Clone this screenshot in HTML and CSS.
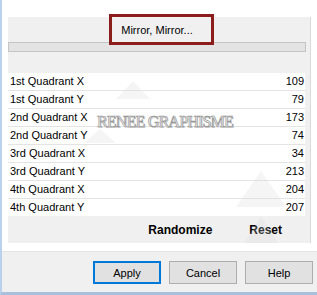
FILE: index.html
```html
<!DOCTYPE html>
<html lang="en">

<head>
    <meta charset="UTF-8">
    <title>Mirror, Mirror</title>
    <link rel="stylesheet" href="styles.css">
</head>

<body>
    <div class="window">
        <div class="content">
            <section class="panel">
                <div class="preset">Mirror, Mirror...</div>
                <div class="slider"></div>
                <ul class="params">
                    <li><span>1st Quadrant X</span><span>109</span></li>
                    <li><span>1st Quadrant Y</span><span>79</span></li>
                    <li><span>2nd Quadrant X</span><span>173</span></li>
                    <li><span>2nd Quadrant Y</span><span>74</span></li>
                    <li><span>3rd Quadrant X</span><span>34</span></li>
                    <li><span>3rd Quadrant Y</span><span>213</span></li>
                    <li><span>4th Quadrant X</span><span>204</span></li>
                    <li><span>4th Quadrant Y</span><span>207</span></li>
                </ul>
                <div class="actions">
                    <span>Randomize</span>
                    <span>Reset</span>
                </div>

                <!-- watermark over the list -->
                <svg class="shapes" width="302" height="226" viewBox="0 0 302 226">
                    <polygon points="125,64 108,82 142,82" />
                    <polygon points="92,112 76,126 108,126" />
                    <polygon points="253,154 228,190 278,190" />
                    <polygon points="253,200 236,226 270,226" />
                </svg>
                <div class="mark">RENEE GRAPHISME</div>
                <div class="highlight"></div>
            </section>
        </div>
        <footer class="buttons">
            <button class="default">Apply</button>
            <button>Cancel</button>
            <button>Help</button>
        </footer>
    </div>
</body>

</html>
```

FILE: styles.css
```css
* {
    box-sizing: border-box;
}

body {
    margin: 0;
    background: white;
    font-family: "Liberation Sans", Arial, sans-serif;
    font-size: 11px;
    color: black;
}

.window {
    width: 317px;
    height: 295px;
    border-left: 2px solid #b9d1ea;
    border-bottom: 3px solid #a9bfdc;
    background: white;
}

.content {
    height: 251px;
    padding: 17px 6px 8px 6px;
}

.panel {
    position: relative;
    height: 226px;
    background: #f0f0f0;
    border-right: 1px solid #dadada;
}

.preset {
    height: 25px;
    line-height: 26px;
    text-align: center;
    padding-right: 4px;
}

.slider {
    height: 10px;
    margin-right: 4px;
    border: 1px solid #c4c4c4;
    background: #e3e3e3;
}

.params {
    list-style: none;
    margin: 21px 5px 0 0;
    padding: 0;
    background: #e4e4e4;
}

.params li {
    display: flex;
    justify-content: space-between;
    height: 17px;
    line-height: 17px;
    margin-bottom: 1px;
    padding: 0 1px 0 2px;
    background: white;
}

.params li:last-child {
    margin-bottom: 0;
}

.actions {
    display: flex;
    justify-content: flex-end;
    gap: 37px;
    height: 27px;
    line-height: 28px;
    padding-right: 28px;
    font-size: 12px;
    font-weight: bold;
}

.shapes {
    position: absolute;
    top: 0;
    left: 0;
    pointer-events: none;
}

.shapes polygon {
    fill: #d8d8d8;
    opacity: 0.25;
}

.mark {
    position: absolute;
    top: 96px;
    left: 89px;
    font-family: "Liberation Serif", serif;
    font-size: 16px;
    letter-spacing: -0.8px;
    color: #fafafa;
    -webkit-text-stroke: 0.7px #999999;
    text-shadow: 1px 1px 0 #cfcfcf;
}

.highlight {
    position: absolute;
    top: -3px;
    left: 101px;
    width: 105px;
    height: 31px;
    border: 3px solid #8c1d1d;
}

.buttons {
    display: flex;
    justify-content: flex-end;
    gap: 8px;
    height: 41px;
    padding: 9px 4px 0 0;
    background: #f0f0f0;
    border-top: 1px solid #e3e3e3;
}

.buttons button {
    width: 68px;
    height: 23px;
    font-family: "Liberation Sans", Arial, sans-serif;
    font-size: 11px;
    color: black;
    background: #e1e1e1;
    border: 1px solid #adadad;
    padding: 0;
}

.buttons .default {
    border: 2px solid #0078d7;
}
```
